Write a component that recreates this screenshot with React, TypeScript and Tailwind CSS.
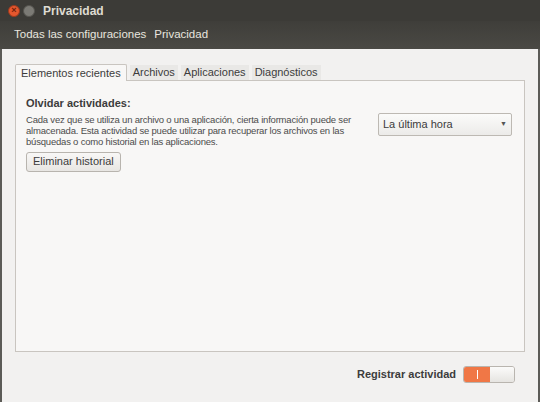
import React from "react";

const font = { fontFamily: '"Liberation Sans", "Noto Sans", sans-serif' };

const App = () => {
	return (
		<div
			className="w-[540px] h-[402px] flex flex-col bg-[#f2f1f0] overflow-hidden"
			style={font}
		>
			{/* title bar */}
			<div className="h-[21px] bg-[#3c3b37] flex items-center pl-[8px] gap-[3px]">
				<div className="w-[12px] h-[12px] rounded-full bg-[#e4572e] border border-[#9b3a1e] flex items-center justify-center text-[9px] leading-none text-[#6d1f0c] font-bold">
					×
				</div>
				<div className="w-[12px] h-[12px] rounded-full bg-[#7b7a75] border border-[#55544f]" />
				<span className="ml-[5px] text-[12px] font-bold text-[#dfdbd2]">
					Privacidad
				</span>
			</div>
			{/* toolbar */}
			<div className="h-[28px] bg-gradient-to-b from-[#3f3e3a] to-[#4a4944] flex items-center px-[14px] gap-[8px] text-[11.5px] text-[#e8e5df]">
				<span>Todas las configuraciones</span>
				<span>Privacidad</span>
			</div>
			<div className="flex-1 flex flex-col border-x-[2px] border-[#5c5b57] pt-[14px]">
				{/* tabs */}
				<div className="flex items-end px-[13px] gap-[3px] text-[11px] text-[#3c3c3c]">
					<div className="h-[17px] px-[5px] flex items-center bg-[#f8f7f6] border border-b-0 border-[#c9c5c0] rounded-t-[2px] relative top-[1px]">
						Elementos recientes
					</div>
					<div className="h-[15px] px-[3px] flex items-center bg-[#e9e8e6]">
						Archivos
					</div>
					<div className="h-[15px] px-[3px] flex items-center bg-[#e9e8e6]">
						Aplicaciones
					</div>
					<div className="h-[15px] px-[3px] flex items-center bg-[#e9e8e6]">
						Diagnósticos
					</div>
				</div>
				{/* panel */}
				<div className="mx-[13px] h-[272px] bg-[#f8f7f6] border border-[#c9c5c0] pl-[10px] pr-[12px] pt-[14px] flex text-[#3c3c3c]">
					<div className="flex flex-col w-[330px]">
						<span className="text-[11px] font-bold text-[#3c3c3c]">
							Olvidar actividades:
						</span>
						<p className="mt-[2px] text-[9.5px] leading-[11px] tracking-[-0.2px] text-[#4c4c4c]">
							Cada vez que se utiliza un archivo o una aplicación, cierta
							información puede ser almacenada. Esta actividad se puede utilizar
							para recuperar los archivos en las búsquedas o como historial en
							las aplicaciones.
						</p>
						<button className="mt-[5px] self-start h-[20px] px-[6px] text-[11px] text-[#3c3c3c] bg-gradient-to-b from-[#f8f7f6] to-[#e8e6e3] border border-[#b8b4ae] rounded-[3px]">
							Eliminar historial
						</button>
					</div>
					<div className="pt-[18px] ml-auto">
						<div className="w-[134px] h-[23px] flex items-center justify-between px-[4px] text-[11px] text-[#3c3c3c] bg-gradient-to-b from-[#fbfbfa] to-[#ecebe9] border border-[#bdb9b3] rounded-[2px]">
							<span>La última hora</span>
							<span className="text-[7px] text-[#555]">▼</span>
						</div>
					</div>
				</div>
				{/* footer */}
				<div className="flex items-center justify-end gap-[7px] px-[23px] mt-[14px]">
					<span className="text-[11px] font-bold text-[#3c3c3c]">
						Registrar actividad
					</span>
					<div className="w-[52px] h-[17px] flex border border-[#b9b5af] rounded-[3px] overflow-hidden">
						<div className="w-[26px] bg-[#f07746] flex items-center justify-center">
							<div className="w-[1px] h-[9px] bg-white" />
						</div>
						<div className="flex-1 bg-gradient-to-b from-[#fbfbfa] to-[#e6e4e1]" />
					</div>
				</div>
			</div>
		</div>
	);
};

export default App;
